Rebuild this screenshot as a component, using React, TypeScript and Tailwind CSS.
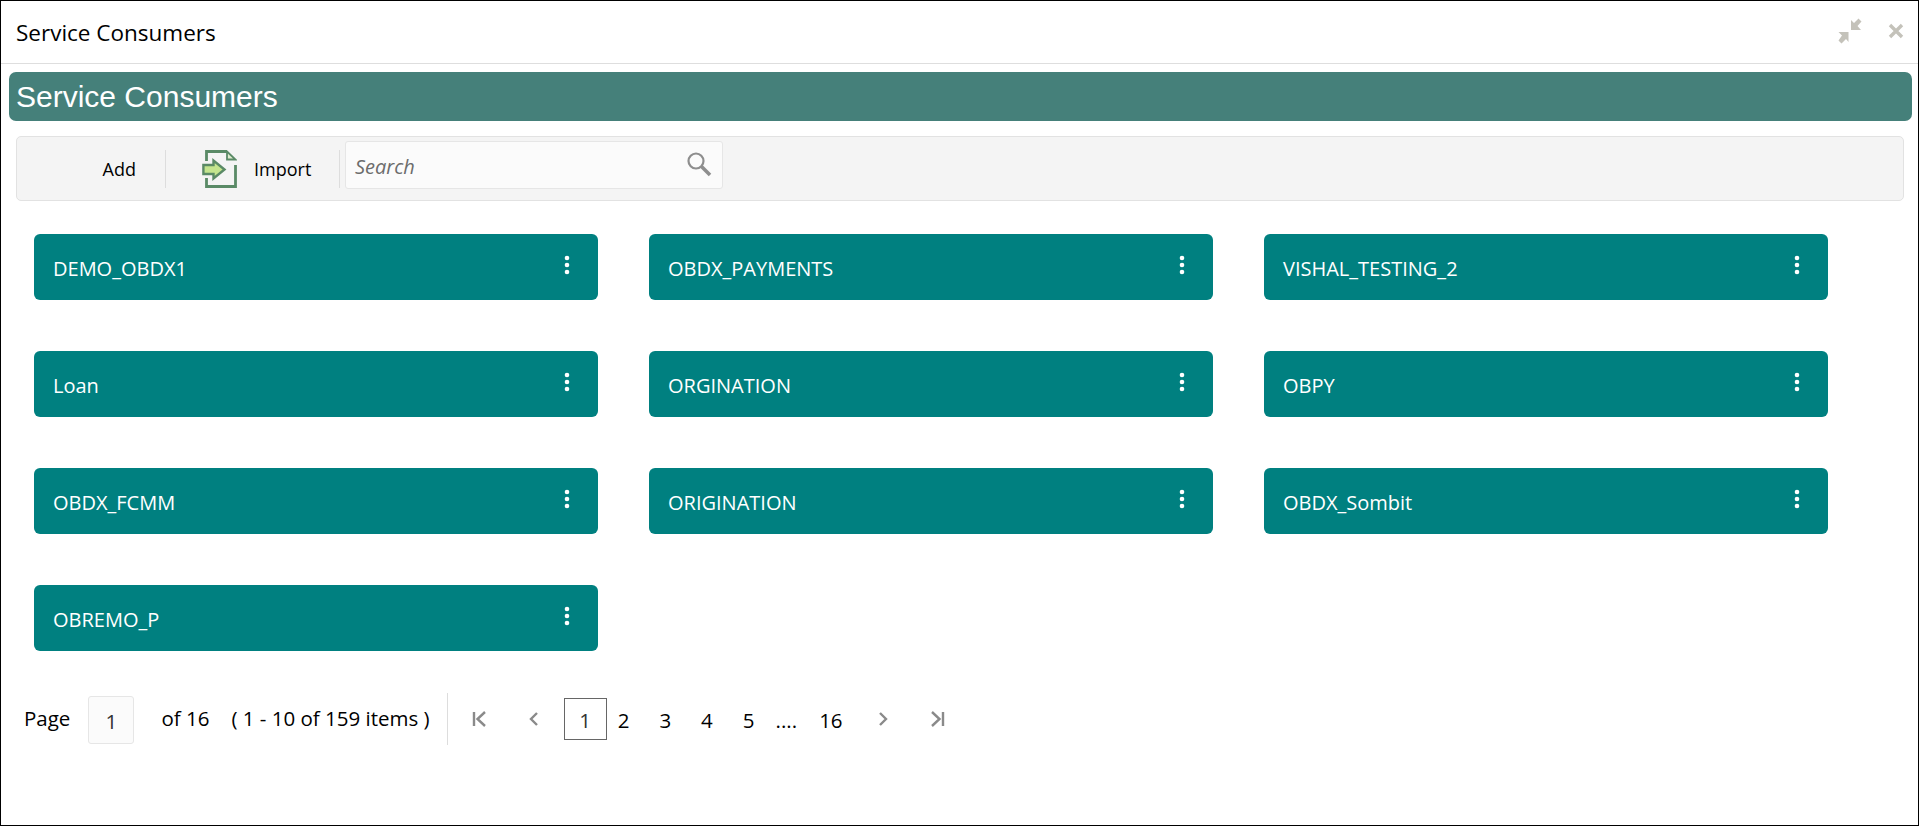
const cards = ["DEMO_OBDX1","OBDX_PAYMENTS","VISHAL_TESTING_2","Loan","ORGINATION","OBPY","OBDX_FCMM","ORIGINATION","OBDX_Sombit","OBREMO_P"];

function Card({ name }: { name: string }) {
  return (
    <div className="flex h-[66px] w-[564px] items-center justify-between rounded-[6px] bg-[#008080] pl-[19px] pr-[28px] text-[20px] text-white">
      <span className="pt-[3px]">{name}</span>
      <svg width="6" height="20" viewBox="0 0 6 20" className="mb-[4px]"><circle cx="3" cy="3" r="2.3" fill="#fff"/><circle cx="3" cy="10" r="2.3" fill="#fff"/><circle cx="3" cy="17" r="2.3" fill="#fff"/></svg>
    </div>
  );
}

function ImportIcon() {
  return (
    <svg width="35" height="38" viewBox="0 0 35 38" fill="none">
      <path d="M4.5 11V1.5H25M33.5 15V36.5H4.5V28" stroke="#5a8a66" strokeWidth="2.8"/>
      <path d="M25 1.5L33.5 9.5H25V1.5Z" fill="#dfeccf" stroke="#5a8a66" strokeWidth="1.8"/>
      <path d="M1.4 15H11.5V10.5L22.5 19.5L11.5 28.5V24H1.4V15Z" fill="#c4e58e" stroke="#5a8a66" strokeWidth="2.4"/>
    </svg>
  );
}

function Nav({ d }: { d: string }) {
  return <svg width="16" height="16" viewBox="0 0 16 16" fill="none"><path d={d} stroke="#8a8a8a" strokeWidth="2.4"/></svg>;
}

export default function App() {
  return (
    <div className="box-border h-[826px] w-[1919px] border border-black bg-white font-['Open_Sans','Noto_Sans',sans-serif] text-black">
      <header className="flex h-[63px] items-center justify-between border-b border-[#dedede] pl-[15px] pr-[14px]">
        <h1 className="pt-[2px] text-[22.5px] font-normal">Service Consumers</h1>
        <div className="flex items-center gap-[25px] pb-[2px]">
          <svg width="26" height="26" viewBox="0 0 26 26" fill="#c4c2ba">
            <path d="M24.5 3.5L21.5 0.5L17 5L14 2V12H24L20.5 8L24.5 3.5Z"/>
            <path d="M1.5 22.5L4.5 25.5L9 21L11.5 24V14H1.5L5 17.5L1.5 22.5Z"/>
          </svg>
          <svg width="16" height="16" viewBox="0 0 16 16" fill="none"><path d="M2 2L14 14M14 2L2 14" stroke="#c4c2ba" strokeWidth="3.4"/></svg>
        </div>
      </header>

      <div className="mx-[8px] mt-[8px] flex h-[49px] w-[1903px] items-center rounded-[7px] bg-[#45807a] pl-[7px] font-['Liberation_Sans',sans-serif] text-[30px] text-white">
        Service Consumers
      </div>

      <div className="mx-[15px] mt-[15px] flex h-[65px] w-[1888px] items-center rounded-[5px] border border-[#e2e2e2] bg-[#f4f4f4] text-[18px]">
        <div className="flex h-[38px] w-[149px] items-center justify-end border-r border-[#dddddd] pr-[29px] pt-[2px]">Add</div>
        <div className="flex h-[38px] w-[174px] items-center border-r border-[#dddddd] pl-[36px]">
          <ImportIcon />
          <span className="ml-[17px] pt-[2px]">Import</span>
        </div>
        <div className="mb-[7px] ml-[5px] flex h-[48px] w-[378px] items-center justify-between rounded-[3px] border border-[#e6e6e6] bg-[#fbfbfb] pl-[9px] pr-[10px]">
          <span className="pt-[4px] text-[20px] italic text-[#6c6c6c]">Search</span>
          <svg width="26" height="26" viewBox="0 0 26 26" fill="none" className="mb-[2px]">
            <circle cx="10" cy="10" r="7.5" stroke="#8e8e8e" strokeWidth="2.2"/>
            <path d="M15.5 15.5L24 24" stroke="#8e8e8e" strokeWidth="3.6"/>
          </svg>
        </div>
      </div>

      <div className="ml-[33px] mt-[33px] grid w-[1800px] grid-cols-[564px_564px_564px] gap-x-[51px] gap-y-[51px]">
        {cards.map((c) => <Card key={c} name={c} />)}
      </div>

      <div className="ml-[23px] mt-[40px] flex h-[56px] items-center text-[20.5px]">
        <span className="pb-[2px]">Page</span>
        <div className="ml-[18px] mt-[1px] flex h-[48px] w-[46px] items-center justify-center rounded-[3px] border border-[#e6e6e6] bg-[#fbfbfb] pt-[4px] text-[#333]">1</div>
        <span className="ml-[27px] pb-[2px]">of 16</span>
        <span className="ml-[22px] pb-[2px]">( 1 - 10 of 159 items )</span>
        <div className="ml-[17px] h-[52px] w-px bg-[#dddddd]" />
        <div className="ml-[24px] flex items-center">
          <Nav d="M2 1V15M13 1L5.5 8L13 15" />
          <div className="ml-[38px]"><Nav d="M11 2L5 8L11 14" /></div>
          <div className="ml-[22px] flex h-[42px] w-[43px] items-center justify-center border border-[#666] pt-[2px] text-[#333]">1</div>
          <div className="ml-[11px] flex items-center gap-[30px] pt-[2px]">
            <span>2</span><span>3</span><span>4</span><span>5</span>
          </div>
          <span className="ml-[21px] pt-[2px]">....</span>
          <span className="ml-[22px] pt-[2px]">16</span>
          <div className="ml-[32px]"><Nav d="M5 2L11 8L5 14" /></div>
          <div className="ml-[38px]"><Nav d="M3 1L10.5 8L3 15M14 1V15" /></div>
        </div>
      </div>
    </div>
  );
}
